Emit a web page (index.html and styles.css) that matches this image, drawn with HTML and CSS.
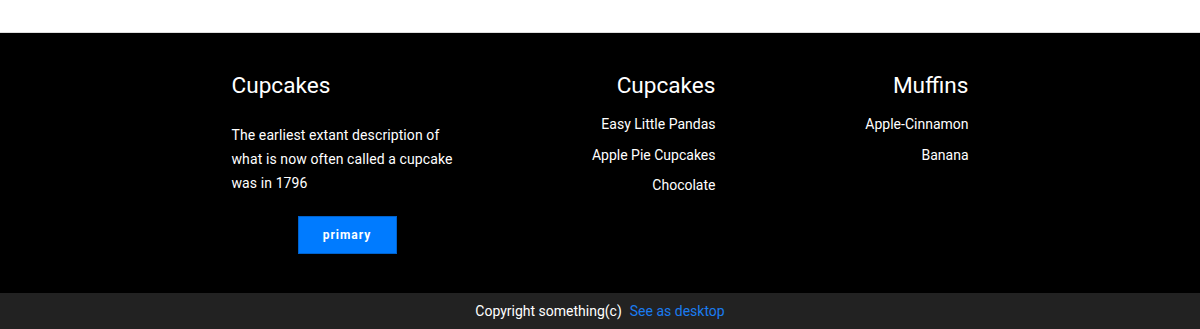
FILE: index.html
```html
<!DOCTYPE html>
<html lang="en">
<head>
    <meta charset="UTF-8">
    <meta name="viewport" content="width=device-width, initial-scale=1.0">
    <title>Footer</title>
    <link rel="stylesheet" href="styles.css">
</head>
<body>
    <div class="page-top"></div>

    <footer class="footer">
        <div class="footer-main">
            <div class="footer-col">
                <h3>Cupcakes</h3>
                <p class="about">The earliest extant description of what is now often called a cupcake was in 1796</p>
                <div class="btn-wrap">
                    <a class="btn" href="#">primary</a>
                </div>
            </div>
            <div class="footer-col links">
                <h3>Cupcakes</h3>
                <a href="#">Easy Little Pandas</a>
                <a href="#">Apple Pie Cupcakes</a>
                <a href="#">Chocolate</a>
            </div>
            <div class="footer-col links">
                <h3>Muffins</h3>
                <a href="#">Apple-Cinnamon</a>
                <a href="#">Banana</a>
            </div>
        </div>
        <div class="footer-bottom">
            <span>Copyright something(c)</span>
            <a href="#">See as desktop</a>
        </div>
    </footer>
</body>
</html>
```

FILE: styles.css
```css
body {
    margin: 0;
    font-family: Roboto, "Liberation Sans", sans-serif;
    background: #fff;
    color: #fff;
}
.page-top {
    height: 32px;
    border-bottom: 1px solid #ddd;
    background: #fff;
}
.footer {
    background: #000;
}
.footer-main {
    width: 737px;
    margin: 0 auto;
    height: 260px;
    display: grid;
    grid-template-columns: 1fr 1fr 1fr;
    column-gap: 22px;
    box-sizing: border-box;
    padding-top: 40px;
}
.footer-col h3 {
    font-size: 22.6px;
    font-weight: 400;
    margin: 0 0 14px;
    line-height: 26px;
}
.about {
    font-size: 14px;
    line-height: 24px;
    letter-spacing: 0.1px;
    margin: 0;
    padding-top: 10px;
}
.btn-wrap {
    display: flex;
    justify-content: center;
    margin-top: 21px;
}
.btn {
    display: block;
    width: 99px;
    height: 38px;
    box-sizing: border-box;
    background: #007bff;
    border: 1px solid #0062cc;
    color: #fff;
    font-size: 12px;
    font-weight: 700;
    letter-spacing: 1px;
    line-height: 36px;
    text-align: center;
    text-decoration: none;
}
.links {
    display: flex;
    flex-direction: column;
    align-items: flex-end;
}
.links h3 {
    margin-bottom: 15px;
}
.links a {
    color: #fff;
    text-decoration: none;
    font-size: 14px;
    line-height: 20px;
    margin-bottom: 10.5px;
}
.footer-bottom {
    background: #222;
    height: 36px;
    display: flex;
    justify-content: center;
    align-items: center;
    gap: 8px;
    font-size: 14px;
}
.footer-bottom a {
    color: #1a7cf0;
    text-decoration: none;
}
```
